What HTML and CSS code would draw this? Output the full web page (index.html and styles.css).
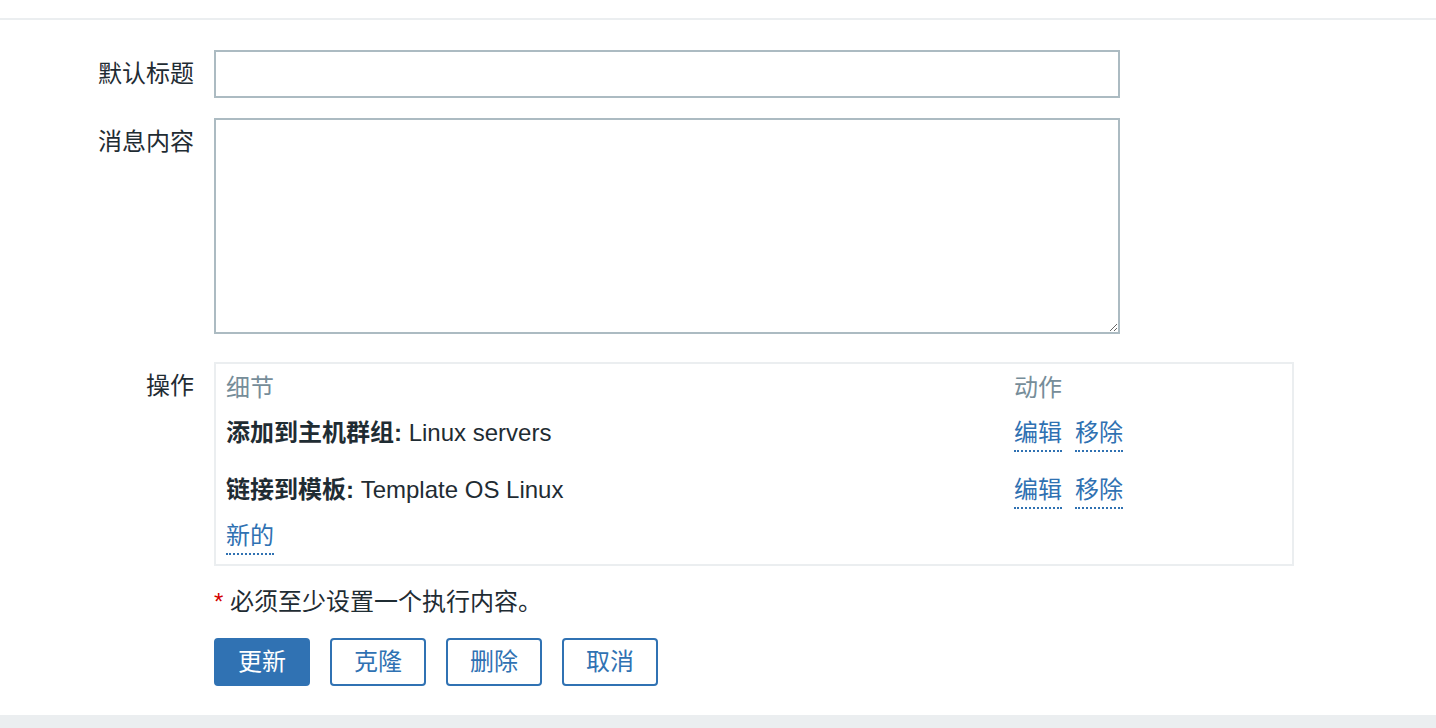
FILE: index.html
```html
<!DOCTYPE html>
<html lang="zh-CN">
<head>
<meta charset="utf-8">
<title>动作</title>
<link rel="stylesheet" href="styles.css">
</head>
<body>
<div class="page">
  <div class="tab-bar"></div>
  <form class="form">
    <div class="form-grid">
      <label class="form-label" for="subject">默认标题</label>
      <div class="form-field"><input id="subject" class="text-input" type="text"></div>

      <label class="form-label" for="message">消息内容</label>
      <div class="form-field"><textarea id="message" class="text-area"></textarea></div>

      <div class="form-label label-ops">操作</div>
      <div class="form-field">
        <div class="ops-box">
          <div class="ops-row ops-head">
            <div class="col-detail">细节</div>
            <div class="col-action">动作</div>
          </div>
          <div class="ops-row ops-item">
            <div class="col-detail"><b>添加到主机群组:</b> Linux servers</div>
            <div class="col-action"><a class="link" href="#">编辑</a><a class="link link-gap" href="#">移除</a></div>
          </div>
          <div class="ops-row ops-item ops-item-2">
            <div class="col-detail"><b>链接到模板:</b> Template OS Linux</div>
            <div class="col-action"><a class="link" href="#">编辑</a><a class="link link-gap" href="#">移除</a></div>
          </div>
          <div class="ops-row ops-new">
            <div class="col-detail"><a class="link" href="#">新的</a></div>
          </div>
        </div>
      </div>

      <div class="form-label"></div>
      <div class="form-field footnote"><span class="asterisk">*</span> 必须至少设置一个执行内容。</div>

      <div class="form-label"></div>
      <div class="form-field buttons">
        <button type="button" class="btn btn-primary">更新</button>
        <button type="button" class="btn btn-alt">克隆</button>
        <button type="button" class="btn btn-alt">删除</button>
        <button type="button" class="btn btn-alt">取消</button>
      </div>
    </div>
  </form>
  <div class="footer-band"></div>
</div>
</body>
</html>
```

FILE: styles.css
```css
html, body {
  margin: 0;
  padding: 0;
  background: #ffffff;
}

body {
  font-family: "Liberation Sans", "Noto Sans CJK SC", sans-serif;
  font-size: 24px;
  color: #1f2c33;
}

.page {
  height: 728px;
  display: flex;
  flex-direction: column;
  overflow: hidden;
}

.tab-bar {
  height: 18px;
  border-bottom: 2px solid #ebeef0;
  flex: none;
}

.form {
  padding-top: 30px;
  flex: none;
}

.form-grid {
  display: grid;
  grid-template-columns: 194px 1fr;
  column-gap: 20px;
  row-gap: 20px;
  align-items: start;
}

.form-label {
  text-align: right;
  line-height: 30px;
  padding-top: 9px;
  color: #1f2c33;
}

.label-ops {
  padding-top: 17px;
}

.form-field {
  min-width: 0;
}

.text-input {
  display: block;
  box-sizing: border-box;
  width: 906px;
  height: 48px;
  margin: 0;
  border: 2px solid #acbbc2;
  border-radius: 0;
  padding: 0 10px;
  font: inherit;
  background: #fff;
  outline: none;
}

.text-area {
  display: block;
  box-sizing: border-box;
  width: 906px;
  height: 216px;
  margin: 0;
  border: 2px solid #acbbc2;
  border-radius: 0;
  padding: 6px 10px;
  font: inherit;
  background: #fff;
  resize: both;
  outline: none;
}

.ops-box {
  box-sizing: border-box;
  width: 1080px;
  margin-top: 8px;
  border: 2px solid #ebeef0;
  padding: 9px 10px 13px 10px;
}

.ops-row {
  display: flex;
  line-height: 30px;
  height: 30px;
}

.col-detail {
  width: 788px;
  flex: none;
  white-space: nowrap;
}

.col-action {
  white-space: nowrap;
}

.ops-head {
  color: #768d99;
}

.ops-item {
  margin-top: 15px;
}

.ops-item-2 {
  margin-top: 27px;
}

.ops-new {
  margin-top: 16px;
}

.ops-item b {
  font-weight: bold;
}

.link {
  display: inline-block;
  line-height: 30px;
  padding-bottom: 2px;
  color: #2f71b2;
  text-decoration: none;
  border-bottom: 2px dotted #2f71b2;
  vertical-align: top;
}

.link-gap {
  margin-left: 13px;
}

.footnote {
  line-height: 30px;
  margin-top: 1px;
  white-space: nowrap;
}

.asterisk {
  color: #d40000;
}

.buttons {
  display: flex;
  gap: 20px;
  margin-top: 1px;
}

.btn {
  box-sizing: border-box;
  width: 96px;
  height: 48px;
  margin: 0;
  padding: 0;
  border: 2px solid #3072b3;
  border-radius: 4px;
  font: inherit;
  line-height: 44px;
  cursor: pointer;
}

.btn-primary {
  background: #3072b3;
  color: #ffffff;
}

.btn-alt {
  background: #ffffff;
  color: #3072b3;
}

.footer-band {
  margin-top: 29px;
  flex: 1;
  background: #ebeef0;
}
```
